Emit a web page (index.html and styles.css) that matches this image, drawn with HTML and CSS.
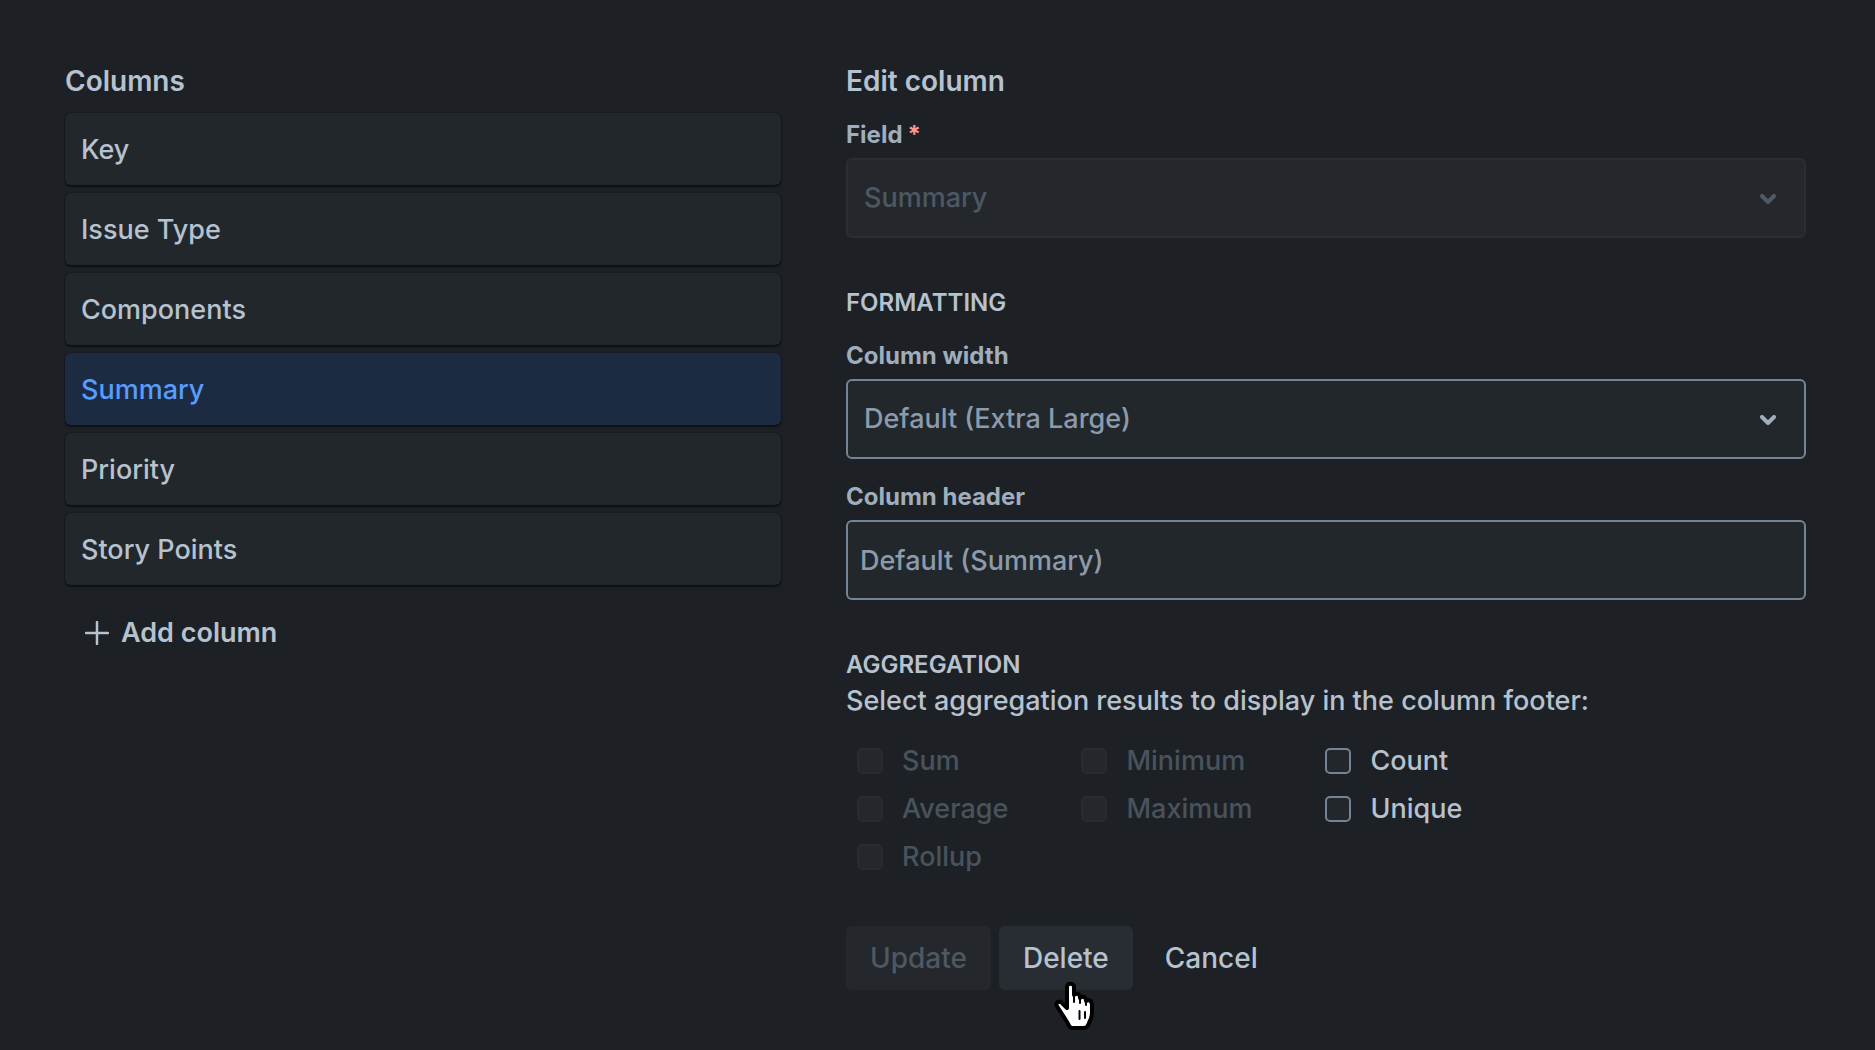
FILE: index.html
```
<!DOCTYPE html>
<html lang="en">
<head>
    <meta charset="UTF-8">
    <meta name="viewport" content="width=device-width, initial-scale=1.0">
    <title>Edit column</title>
    <link rel="stylesheet" href="styles.css">
</head>
<body>

<main class="editor">
    <section class="columns">
        <h2>Columns</h2>
        <ul class="column-list">
            <li><button type="button" class="column-item">Key</button></li>
            <li><button type="button" class="column-item">Issue Type</button></li>
            <li><button type="button" class="column-item">Components</button></li>
            <li><button type="button" class="column-item selected" aria-current="true">Summary</button></li>
            <li><button type="button" class="column-item">Priority</button></li>
            <li><button type="button" class="column-item">Story Points</button></li>
        </ul>
        <button type="button" class="add-column">
            <svg width="24" height="24" viewBox="0 0 24 24" aria-hidden="true"><path d="M12 1v22M1 12h22"/></svg>
            Add column
        </button>
    </section>

    <form class="edit-column">
        <h2>Edit column</h2>

        <div class="field">
            <label for="field">Field<span class="required">*</span></label>
            <div class="select">
                <select id="field" disabled>
                    <option>Summary</option>
                </select>
                <svg class="chevron" width="16" height="10" viewBox="0 0 16 10" aria-hidden="true"><path d="M2 2l6 6 6-6"/></svg>
            </div>
        </div>

        <h3>Formatting</h3>
        <div class="field">
            <label for="width">Column width</label>
            <div class="select">
                <select id="width">
                    <option>Default (Extra Large)</option>
                </select>
                <svg class="chevron" width="16" height="10" viewBox="0 0 16 10" aria-hidden="true"><path d="M2 2l6 6 6-6"/></svg>
            </div>
        </div>
        <div class="field">
            <label for="header">Column header</label>
            <input type="text" id="header" placeholder="Default (Summary)">
        </div>

        <h3>Aggregation</h3>
        <p class="hint">Select aggregation results to display in the column footer:</p>
        <div class="checks">
            <div class="check-group">
                <label class="check disabled"><input type="checkbox" disabled>Sum</label>
                <label class="check disabled"><input type="checkbox" disabled>Average</label>
                <label class="check disabled"><input type="checkbox" disabled>Rollup</label>
            </div>
            <div class="check-group">
                <label class="check disabled"><input type="checkbox" disabled>Minimum</label>
                <label class="check disabled"><input type="checkbox" disabled>Maximum</label>
            </div>
            <div class="check-group">
                <label class="check"><input type="checkbox">Count</label>
                <label class="check"><input type="checkbox">Unique</label>
            </div>
        </div>

        <div class="actions">
            <button type="submit" class="btn" disabled>Update</button>
            <button type="button" class="btn btn-delete">Delete
                <svg class="pointer" width="42" height="50" viewBox="0 0 42 50" aria-hidden="true">
                    <path class="hand" d="M13.500 40 L4.500 26 C1.500 22 5.500 19 9 22 L14 27 V6 C14 1.500 21 1.500 21 6 V14 C24 11.500 27 13 27 17 C30 14.500 33 16 33 20 C36 18 39 20 39 24 V32 C39 37 37 39 36 42 C34.500 46 33.500 47 31 47 H19 C16 47 15.500 43 13.500 40 Z"/>
                    <path class="crease" d="M21 13v8M27 16v6M33 19v5M26.500 30v8M32 31v6"/>
                </svg>
            </button>
            <button type="button" class="btn btn-subtle">Cancel</button>
        </div>
    </form>
</main>

</body>
</html>
```
FILE: styles.css
```
* {
    box-sizing: border-box;
}
body {
    margin: 0;
    min-height: 100vh;
    background: #1d2125;
    color: #b6c2cf;
    font-family: Inter, "Liberation Sans", sans-serif;
    font-size: 27px;
    font-weight: 450;
    line-height: 40px;
}
button, input, select {
    font: inherit;
    color: inherit;
}
.editor {
    display: grid;
    grid-template-columns: 716fr 960fr; /* List takes a bit less than the form */
    gap: 65px;
    padding: 65px 69px 60px 65px;
}
h2 {
    margin: 0 0 16px;
    font-size: 28px;
    font-weight: 600;
    line-height: 32px;
}
h3 {
    margin: 49px 0 0;
    font-size: 24px;
    font-weight: 600;
    line-height: 31px;
    text-transform: uppercase;
}

/* Column list */
.column-list {
    display: flex;
    flex-direction: column;
    gap: 8px;
    margin: 0;
    padding: 0;
    list-style: none;
}
.column-item {
    display: block;
    width: 100%;
    padding: 17px 16px 15px;
    border: none;
    border-radius: 6px;
    background: #22272b;
    box-shadow: 0 2px 2px rgba(3, 4, 4, 0.5), 0 0 2px rgba(3, 4, 4, 0.5);
    text-align: left;
    cursor: pointer;
}
.column-item.selected {
    background: #1c2b41;
    color: #579dff;
}
.add-column {
    display: flex;
    align-items: center;
    gap: 12px;
    margin-top: 28px;
    padding: 0 20px;
    border: none;
    background: none;
    font-weight: 600;
    cursor: pointer;
}
.add-column svg {
    fill: none;
    stroke: currentColor;
    stroke-width: 2.5;
    stroke-linecap: round;
}

/* Form fields */
.field {
    margin-top: 21px;
}
.field label {
    display: block;
    margin-bottom: 6px;
    color: #9fadbc;
    font-size: 24px;
    font-weight: 700;
    line-height: 34px;
}
.required {
    margin-left: 5px;
    color: #ff9790;
}
.select {
    position: relative;
}
.field select,
.field input {
    display: block;
    width: 100%;
    height: 80px;
    padding: 0 12px;
    border: 2px solid #738496;
    border-radius: 6px;
    background: #22272b;
    color: #8c9bab;
    appearance: none;
}
.field select {
    padding: 0 16px;
}
.field select:disabled {
    border-color: #2a2e33;
    background: #24282c;
    color: #4d5863;
    opacity: 1;
}
.field input::placeholder {
    color: #8c9bab;
}
.chevron {
    position: absolute;
    top: 36px;
    right: 30px;
    fill: none;
    stroke: #9fadbc;
    stroke-width: 4;
    stroke-linecap: round;
    stroke-linejoin: round;
    pointer-events: none;
}
select:disabled + .chevron {
    stroke: #4f5a66;
}

/* Aggregation */
.hint {
    margin: 0;
    line-height: 42px;
}
.checks {
    display: flex;
    gap: 73px;
    margin-top: 19px;
    padding-left: 11px;
}
.check-group {
    display: flex;
    flex-direction: column;
    gap: 8px;
}
.check {
    display: flex;
    align-items: center;
    gap: 19px;
}
.check.disabled {
    color: #48535e;
}
.check input {
    width: 26px;
    height: 26px;
    margin: 0;
    border: 2px solid #738496;
    border-radius: 5px;
    background: #22272b;
    appearance: none;
}
.check input:disabled {
    border-color: #282c30;
    background: #24272b;
}

/* Buttons */
.actions {
    display: flex;
    gap: 8px;
    margin-top: 49px;
}
.btn {
    position: relative;
    height: 64px;
    padding: 0 24px;
    border: none;
    border-radius: 6px;
    background: #24272b;
    font-size: 28px;
    font-weight: 550;
    cursor: pointer;
}
.btn:disabled {
    color: #4d5863;
}
.btn-delete {
    background: #282d34;
}
.btn-subtle {
    background: none;
}
.pointer {
    position: absolute;
    top: 55px;
    left: 54px;
}
.hand {
    fill: #fff;
    stroke: #000;
    stroke-width: 4;
    stroke-linejoin: round;
}
.crease {
    fill: none;
    stroke: #000;
    stroke-width: 2;
    stroke-linecap: round;
}
```
